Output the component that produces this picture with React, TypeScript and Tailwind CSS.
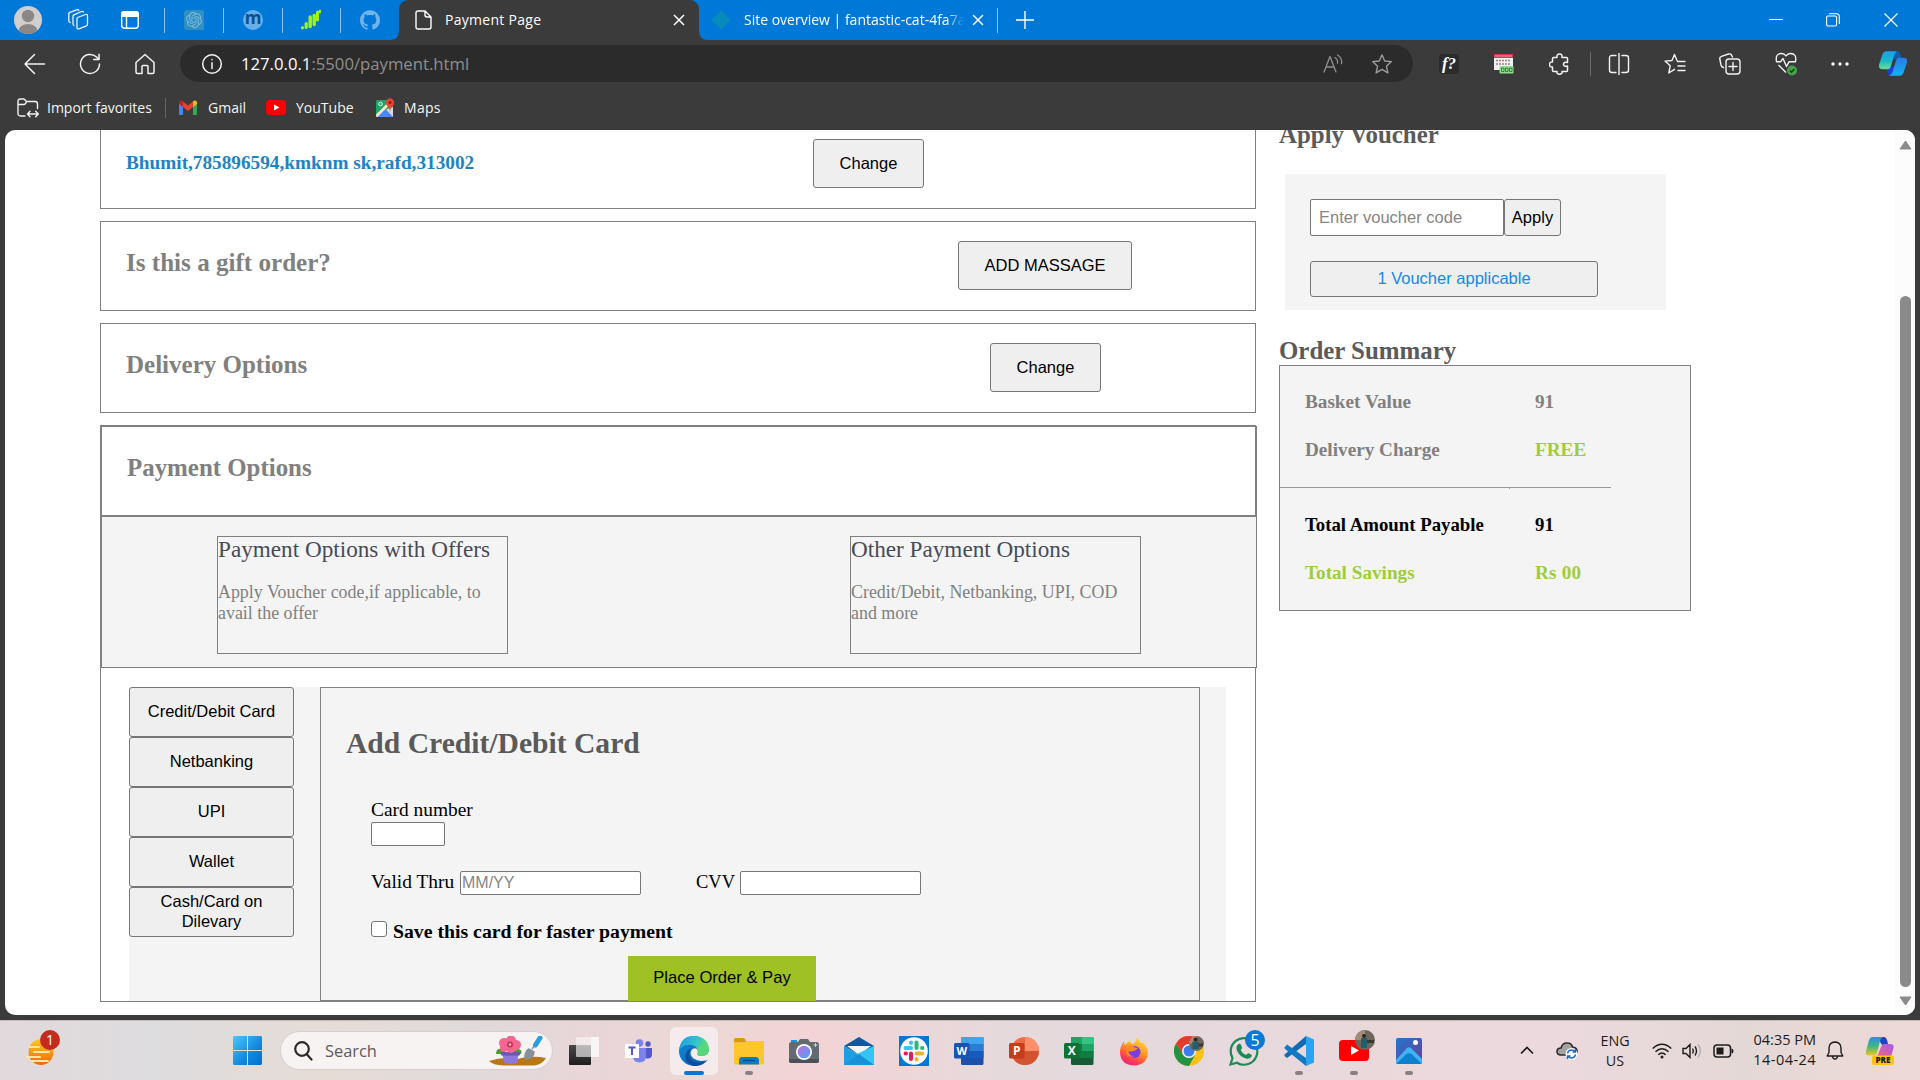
import type { ReactNode } from "react";
import { SiGithub, SiOpenai } from "react-icons/si";

function Slot({ className = "", children }: { className?: string; children: ReactNode }) {
  return <div className={`flex h-7 w-7 shrink-0 items-center justify-center ${className}`}>{children}</div>;
}

function Line({ children, size = 22, width = 1.3, color = "#f2f2f2" }: { children: ReactNode; size?: number; width?: number; color?: string }) {
  return (
    <svg width={size} height={size} viewBox="0 0 22 22" fill="none" stroke={color} strokeWidth={width} strokeLinecap="round" strokeLinejoin="round">
      {children}
    </svg>
  );
}

const STAR = "M11 1.8 13.7 8l6.7.6-5 4.6 1.5 6.7L11 16.4l-5.9 3.5 1.5-6.7-5-4.6L8.3 8z";

function CloseX() {
  return (
    <svg width="12" height="12" viewBox="0 0 12 12" stroke="#fff" strokeWidth="1.5">
      <path d="M1 1l10 10M11 1L1 11" />
    </svg>
  );
}

function TitleBar() {
  return (
    <div className="flex h-10 shrink-0 items-center bg-[#0078d7]">
      <Slot className="ml-3.5">
        <svg width="28" height="28" viewBox="0 0 28 28">
          <defs><clipPath id="av"><circle cx="14" cy="14" r="14" /></clipPath></defs>
          <circle cx="14" cy="14" r="14" fill="#d1cfcd" />
          <g clipPath="url(#av)" fill="#8a8785"><circle cx="14" cy="10" r="6.2" /><ellipse cx="14" cy="25" rx="9.5" ry="7" /></g>
        </svg>
      </Slot>
      <Slot className="ml-[22px]">
        <Line>
          <path d="M10.5 8.5 18.5 5.500q2-.6 2 1.300v8.500q0 1-1 1.500l-7.500 3q-2 .6-2-1.300V9.800q0-1 .5-1.300z" />
          <path d="M7 16.500q-1-.4-1-1.700V7.300q0-1 1-1.500l7.500-3.300q1.300-.5 2 .5M3.200 13.500q-1.400-.5-1.400-1.700V4.800q0-1 1-1.500L9.800.8q1.300-.5 2 .5" />
        </Line>
      </Slot>
      <Slot className="ml-6">
        <svg width="20" height="20" viewBox="0 0 20 20"><rect x="1.7" y="1.7" width="16.6" height="16.6" rx="3" fill="none" stroke="#fff" strokeWidth="1.4" /><path d="M1 7V4q0-3 3-3h12q3 0 3 3v3z" fill="#fff" /><path d="M6.5 7v11" stroke="#fff" strokeWidth="1.4" /></svg>
      </Slot>
      <div className="ml-5 h-[25px] w-px bg-[#8fc3ee]" />
      <Slot className="ml-[15px]">
        <div className="flex h-5 w-5 items-center justify-center rounded-tl-[3px] rounded-tr-[3px] rounded-bl-[3px] bg-[#2f8fc0]"><SiOpenai size={16} color="#7db9dd" /></div>
      </Slot>
      <div className="ml-[15px] h-[25px] w-px bg-[#8fc3ee]" />
      <Slot className="ml-[15px]">
        <div className="flex h-5 w-5 items-center justify-center rounded-full bg-[#66aee8] pb-1 font-['Open_Sans'] text-[17px] leading-5 font-bold text-[#0a4f8f]">m</div>
      </Slot>
      <div className="ml-[15px] h-[25px] w-px bg-[#8fc3ee]" />
      <Slot className="ml-[14px]">
        <svg width="22" height="22" viewBox="0 0 22 22" fill="none" stroke="#a4f50a" strokeLinecap="round">
          <path d="M2.500 18.500v.5" strokeWidth="3" /><path d="M6.200 14.500v4" strokeWidth="3.200" /><path d="M10.200 8v9.500" strokeWidth="3.400" /><path d="M14.200 6.500v9" strokeWidth="3.400" /><path d="M17.500 3v8" strokeWidth="3" /><path d="M20 1.500v2" strokeWidth="2" />
        </svg>
      </Slot>
      <div className="ml-[15px] h-[25px] w-px bg-[#8fc3ee]" />
      <Slot className="ml-[15px]"><SiGithub size={20} color="#6fb4ea" /></Slot>
      <div className="relative ml-[15px] flex h-10 w-[300px] shrink-0 items-center rounded-t-[9px] bg-[#3b3b3b]">
        <svg className="absolute bottom-0 -left-[9px]" width="9" height="9"><path d="M9 0v9H0q9 0 9-9z" fill="#3b3b3b" /></svg>
        <svg className="absolute -right-[9px] bottom-0" width="9" height="9"><path d="M0 0v9h9q-9 0-9-9z" fill="#3b3b3b" /></svg>
        <Slot className="ml-2.5">
          <svg width="17" height="20" viewBox="0 0 17 20" fill="none" stroke="#fff" strokeWidth="1.4"><path d="M3 1h7l6 6v10q0 2-2 2H3q-2 0-2-2V3q0-2 2-2zM10 1v4q0 2 2 2h4" /></svg>
        </Slot>
        <span className="ml-2 pb-0.5 text-[14px] tracking-[0.28px] text-white">Payment Page</span>
        <Slot className="mr-[6px] ml-auto"><CloseX /></Slot>
      </div>
      <Slot className="ml-2">
        <svg width="20" height="20" viewBox="0 0 20 20"><path d="M10 .5 19.500 10 10 19.500.5 10z" fill="#078bbb" /></svg>
      </Slot>
      <div className="ml-[9px] w-[220px] overflow-hidden pb-0.5 text-[14px] whitespace-nowrap text-white [mask-image:linear-gradient(90deg,#000_92%,transparent)]">Site overview | fantastic-cat-4fa7a</div>
      <Slot className="ml-0"><CloseX /></Slot>
      <div className="ml-[5px] h-[25px] w-px bg-[#8fc3ee]" />
      <Slot className="ml-[13px]">
        <svg width="18" height="18" stroke="#fff" strokeWidth="1.4"><path d="M9 0v18M0 9h18" /></svg>
      </Slot>
      <Slot className="ml-auto"><svg width="14" height="2"><path d="M0 .5h14" stroke="#fff" /></svg></Slot>
      <Slot className="ml-[29px]">
        <svg width="14" height="14" viewBox="0 0 14 14" fill="none" stroke="#fff" strokeWidth="1.1"><rect x=".6" y="3" width="10" height="10" rx="1.5" /><path d="M3 .7h7.500q2.800 0 2.800 2.800V11" /></svg>
      </Slot>
      <Slot className="mr-[15px] ml-[30px]">
        <svg width="14" height="14" stroke="#fff" strokeWidth="1.2"><path d="M.5.5l13 13M13.500.5l-13 13" /></svg>
      </Slot>
    </div>
  );
}

function CopilotLogo() {
  return (
    <svg width="31" height="27" viewBox="0 0 31 27">
      <defs>
        <linearGradient id="cp1" x1="0" y1="0" x2="0" y2="1"><stop offset="0" stopColor="#16a3ea" /><stop offset=".55" stopColor="#1fb6c9" /><stop offset="1" stopColor="#6ee08b" /></linearGradient>
        <linearGradient id="cp2" x1="0" y1="0" x2="0" y2="1"><stop offset="0" stopColor="#2b7be4" /><stop offset="1" stopColor="#14b1fb" /></linearGradient>
      </defs>
      <path d="M14 0h7q2 0 3 4l1 4-7 2z" fill="#0c5fb0" />
      <path d="M17 26h-6q-2 0-2-4l-1-4 9-2z" fill="#1d3fd6" />
      <path d="M8 0h12q-2 1-3 4l-4 13q-1 3-4 3H4q-5 0-4-5L4 3q1-3 4-3z" fill="url(#cp1)" />
      <path d="M22 7h5q5 0 4 5l-4 12q-1 3-4 3H11q3-1 4-4l4-13q1-3 3-3z" fill="url(#cp2)" />
    </svg>
  );
}

function Toolbar() {
  return (
    <div className="flex h-[47px] shrink-0 items-center">
      <Slot className="ml-[21px]"><Line width={1.5}><path d="M1 11h19.500M10.500 1.500 1 11l9.500 9.500" /></Line></Slot>
      <Slot className="ml-[27px]"><Line width={1.5}><path d="M20.500 11a9.500 9.500 0 1 1-3-7l2.500 2.500M20 1.200v5.300h-5.300" /></Line></Slot>
      <Slot className="ml-[27px]"><Line width={1.5}><path d="M2 9.500 11 1.500l9 8V19q0 1.500-1.500 1.500H14v-7q0-1-1-1H9q-1 0-1 1v7H3.500Q2 20.500 2 19z" /></Line></Slot>
      <div className="ml-[21px] flex h-[37px] w-[1233px] shrink-0 items-center rounded-full bg-[#2b2b2b]">
        <Slot className="ml-[18px]"><Line width={1.5}><circle cx="11" cy="11" r="9.3" /><path d="M11 9.800v5.700M11 6.500v.3" /></Line></Slot>
        <span className="ml-[15px] text-[16.7px] text-[#8f8f8f]"><span className="text-white">127.0.0.1</span>:5500/payment.html</span>
        <Slot className="ml-auto"><Line color="#8f8f8f"><path d="M2 19 8 3.500 14 19M4 14h8M13 4.500q3 2 2.500 5.500M15.500 2q5 3 4 8.500" /></Line></Slot>
        <Slot className="mr-[17px] ml-[21px]"><Line color="#a0a0a0"><path d={STAR} /></Line></Slot>
      </div>
      <Slot className="ml-[22px]">
        <div className="flex h-5 w-5 items-center justify-center rounded-sm bg-[#2b2b2b] font-['Liberation_Serif'] text-[17px] font-bold text-white italic">f?</div>
      </Slot>
      <Slot className="ml-[27px]">
        <svg width="20" height="20" viewBox="0 0 20 20">
          <rect width="19" height="16" fill="#f4f0f0" /><path d="M0 0h19v4H0z" fill="#c93a50" /><path d="M1 2h17" stroke="#f3b7bf" strokeWidth=".8" />
          <path d="M2 6.500h15M2 10h15" stroke="#8d8888" strokeWidth="1.6" strokeDasharray="2 1" />
          <rect x="5.500" y="12" width="14" height="7.500" rx="1" fill="#8fe08f" />
          <path d="M7.500 14h2.500v3.500H7.500zM11.500 14h2.500v3.500h-2.500zM15.500 14H18v3.500h-2.500z" fill="none" stroke="#2f6a2f" strokeWidth=".8" />
        </svg>
      </Slot>
      <Slot className="ml-7"><Line width={1.5}><path d="M4.500 4.500H8q-.5-3.500 2.500-3.500T13 4.500h4.500q1 0 1 1v4q-4-1-4 1.800t4 1.700v4.500q0 1-1 1H13q.5 2.800-2.500 2.800T8 18.500H4.500q-1 0-1-1V14q-3 .3-3-2.500t3-2.500V5.500q0-1 1-1z" /></Line></Slot>
      <div className="ml-4 h-6 w-px bg-[#6a6a6a]" />
      <Slot className="ml-3.5"><Line width={1.4}><path d="M8 2.500H4Q1.500 2.500 1.500 5v12Q1.500 19.500 4 19.500h4M11 .5v21M14 2.500h4q2.500 0 2.500 2.500v12q0 2.500-2.500 2.500h-4" /></Line></Slot>
      <Slot className="ml-7"><Line width={1.4}><path d="M13 7.500 10.500 1.500 8 7.500l-7 .6L6.200 12.800 4.800 20l5.700-3.700M13.500 8.500H21M14 13h7M14 17.500h7" /></Line></Slot>
      <Slot className="ml-[27px]"><Line width={1.4}><path d="M4.500 14.500Q2.500 14 2 12L.8 6Q.500 4 2.500 3.300L9.500 1q2-.5 3 1l1 2" /><rect x="7" y="6" width="14" height="15" rx="3" /><path d="M14 9.500v8M10 13.500h8" /></Line></Slot>
      <Slot className="ml-7">
        <svg width="22" height="24" viewBox="0 0 22 24" fill="none" stroke="#f2f2f2" strokeWidth="1.4" strokeLinejoin="round">
          <path d="M1.500 9.500q-1.500-8 5-8 3 0 4.500 2.500 1.500-2.500 4.500-2.500 6.500 0 5 8M1 9.800h4.500L8 6.500l3.500 8L14 9.800h7M3.500 13 11 20.500" /><circle cx="17" cy="18.500" r="5" fill="#45a34a" stroke="none" /><path d="m14.800 18.600 1.600 1.600 3-3.200" stroke="#163d18" />
        </svg>
      </Slot>
      <Slot className="ml-[26px]"><svg width="18" height="4" fill="#fff"><circle cx="2" cy="2" r="1.7" /><circle cx="9" cy="2" r="1.7" /><circle cx="16" cy="2" r="1.7" /></svg></Slot>
      <Slot className="ml-[25px]"><CopilotLogo /></Slot>
    </div>
  );
}

function FavoritesBar() {
  return (
    <div className="flex h-[43px] shrink-0 items-center pb-0.5 text-[14px] whitespace-nowrap text-[#f5f5f5]">
      <Slot className="ml-3.5"><Line width={1.4}><path d="M8 19H3.500Q1 19 1 16.500v-12Q1 2 3.500 2H7l2.500 2.500H18q2.500 0 2.500 2.500v4.500M1 7.500h6q1.500 0 2.500-3M10.500 17h10.800M13 14.300 10.500 17l2.500 2.700M18.700 14.300l2.600 2.700-2.600 2.700" /></Line></Slot>
      <span className="ml-[5px] w-[105px]">Import favorites</span>
      <div className="ml-[13px] h-5 w-px bg-[#666]" />
      <Slot className="ml-2">
        <svg width="18" height="15" viewBox="0 0 18 15"><path d="M0 2v12q0 1 1 1h3V5z" fill="#4285f4" /><path d="M18 2v12q0 1-1 1h-3V5z" fill="#34a853" /><path d="M4 1.500 9 5.500l5-4V7l-5 4-5-4z" fill="#ea4335" /><path d="M14 1.500Q16-.5 18 2v2l-4 3z" fill="#fbbc04" /><path d="M4 1.500Q2-.500 0 2v2l4 3z" fill="#c5221f" /></svg>
      </Slot>
      <span className="ml-[6px] w-[38px]">Gmail</span>
      <Slot className="ml-4">
        <svg width="20" height="15" viewBox="0 0 20 15"><rect width="20" height="15" rx="3.5" fill="#f00" /><path d="m8 4.500 5.500 3L8 10.500z" fill="#fff" /></svg>
      </Slot>
      <span className="ml-1.5 w-[58px]">YouTube</span>
      <Slot className="ml-[17px]">
        <svg width="19" height="20" viewBox="0 0 19 20"><rect y="2" width="17" height="17" rx="1.5" fill="#1fa463" /><path d="M1 19 9 10.500l8 8q0 .5-1 .5z" fill="#4a89f4" /><path d="M0 16.500 13.500 3l2 2L1.500 19Q0 19 0 17.500z" fill="#f5e9c6" /><path d="M10 11.500 17 19V9z" fill="#d6d8da" /><circle cx="4.5" cy="6" r="1.8" fill="none" stroke="#fff" /><path d="M14 14q-.3-4-2.700-6Q9.500 6 10 3.800 11 .3 14 .3t4 3.500q.5 2.200-1.300 4.200Q14.300 10 14 14z" fill="#ea4335" /><circle cx="14" cy="4.5" r="1.5" fill="#8c1d18" /></svg>
      </Slot>
      <span className="ml-[5px] tracking-[0.3px]">Maps</span>
    </div>
  );
}

function GreyButton({ className = "", children }: { className?: string; children: ReactNode }) {
  return (
    <button className={`flex shrink-0 items-center justify-center rounded-[3px] border border-[#767676] bg-[#efefef] pb-0.5 font-['Liberation_Sans'] text-[16.5px] leading-5 text-black ${className}`}>
      {children}
    </button>
  );
}

function OfferBox({ title, text, className = "" }: { title: string; text: string; className?: string }) {
  return (
    <div className={`h-[118px] w-[291px] shrink-0 border border-[#808080] ${className}`}>
      <h4 className="text-[23.2px] leading-6 text-[#474b58]">{title}</h4>
      <p className="mt-[21px] text-[17.9px] leading-[21px] text-[#808080]">{text}</p>
    </div>
  );
}

function CardForm() {
  return (
    <div className="ml-[26px] h-[314px] w-[880px] border border-[#808080]">
      <h2 className="mt-[38px] ml-[25px] text-[29.6px] leading-[34px] font-bold text-[#5a5a5a]">Add Credit/Debit Card</h2>
      <div className="mt-[38px] ml-[50px] text-[19.4px] leading-6 text-black">
        <div>Card number</div>
        <input className="block h-6 w-[74px] rounded-[2px] border border-[#767676] bg-white" />
        <div className="mt-6 flex h-6 items-start">
          <span className="w-[89px]">Valid Thru</span>
          <input placeholder="MM/YY" className="mt-px h-6 w-[181px] rounded-[2px] border border-[#767676] bg-white px-px font-['Liberation_Sans'] text-[16px] placeholder:text-[#858585]" />
          <span className="ml-[55px] w-[44px] text-[18.5px]">CVV</span>
          <input className="mt-px h-6 w-[181px] rounded-[2px] border border-[#767676] bg-white" />
        </div>
        <label className="mt-[25px] flex items-start text-[19.75px] font-bold">
          <span className="mt-0.5 h-4 w-4 rounded-[3px] border border-[#767676] bg-white" />
          <span className="ml-1.5">Save this card for faster payment</span>
        </label>
      </div>
      <button className="relative mt-[13px] ml-[307px] flex h-[45px] w-[188px] items-center justify-center bg-[#9fc125] font-['Liberation_Sans'] text-[16.6px] text-black">Place Order &amp; Pay</button>
    </div>
  );
}

function CheckoutSteps() {
  return (
    <div className="ml-[95px] w-[1156px] shrink-0">
      <section className="flex h-[79px] items-start border border-t-0 border-[#808080] pl-[25px]">
        <h3 className="mt-[21px] w-[687px] text-[19.25px] leading-6 font-bold text-[#1e83c3]">Bhumit,785896594,kmknm sk,rafd,313002</h3>
        <GreyButton className="mt-[9px] h-[49px] w-[111px]">Change</GreyButton>
      </section>
      <section className="mt-3 flex h-[90px] items-start border border-[#808080] pl-[25px]">
        <h3 className="mt-[25px] w-[832px] text-[25.1px] leading-8 font-bold text-[#808080]">Is this a gift order?</h3>
        <GreyButton className="mt-[19px] h-[49px] w-[174px]">ADD MASSAGE</GreyButton>
      </section>
      <section className="mt-3 flex h-[90px] items-start border border-[#808080] pl-[25px]">
        <h3 className="mt-[25px] w-[864px] text-[25px] leading-8 font-bold text-[#808080]">Delivery Options</h3>
        <GreyButton className="mt-[19px] h-[49px] w-[111px]">Change</GreyButton>
      </section>
      <section className="mt-3 h-[577px] border border-[#808080]">
        <div className="h-[90px] w-[1156px] border border-[#808080] pt-[25px] pl-[25px]">
          <h3 className="text-[24.9px] leading-8 font-bold text-[#808080]">Payment Options</h3>
        </div>
        <div className="flex h-[152px] w-[1156px] items-start border border-[#808080] bg-[#f4f4f4] pt-[19px] pl-[115px]">
          <OfferBox title="Payment Options with Offers" text="Apply Voucher code,if applicable, to avail the offer" />
          <OfferBox className="ml-[342px]" title="Other Payment Options" text="Credit/Debit, Netbanking, UPI, COD and more" />
        </div>
        <div className="mt-[19px] ml-7 flex h-[314px] w-[1097px] bg-[#f4f4f4]">
          <div className="w-[165px] shrink-0">
            {["Credit/Debit Card", "Netbanking", "UPI", "Wallet", "Cash/Card on Dilevary"].map((m) => (
              <GreyButton key={m} className="h-[50px] w-[165px] px-[17px]">{m}</GreyButton>
            ))}
          </div>
          <CardForm />
        </div>
      </section>
    </div>
  );
}

function SummaryRow({ label, value, className = "", valueClass = "" }: { label: string; value: string; className?: string; valueClass?: string }) {
  return (
    <div className={`flex pl-[25px] text-[19.2px] leading-6 font-bold ${className}`}>
      <span className="w-[230px]">{label}</span>
      <span className={valueClass}>{value}</span>
    </div>
  );
}

function OrderPanel() {
  return (
    <div className="-mt-[11px] ml-[23px] w-[412px] shrink-0">
      <h3 className="text-[24.9px] leading-8 font-bold text-[#5a5a5a]">Apply Voucher</h3>
      <div className="mt-[23px] ml-1.5 h-[136px] w-[381px] bg-[#f4f4f4] p-[25px]">
        <div className="flex">
          <input placeholder="Enter voucher code" className="h-[37px] w-[194px] rounded-[2px] border border-[#767676] bg-white px-2 font-['Liberation_Sans'] text-[16.5px] placeholder:text-[#858585]" />
          <GreyButton className="h-[37px] w-[57px]">Apply</GreyButton>
        </div>
        <GreyButton className="mt-[25px] h-9 w-[288px] [&]:text-[#1488ec]">1 Voucher applicable</GreyButton>
      </div>
      <h3 className="mt-[26px] text-[24.9px] leading-[29px] font-bold text-[#5a5a5a]">Order Summary</h3>
      <div className="h-[246px] w-[412px] border border-[#808080] bg-[#f4f4f4] pt-6">
        <SummaryRow className="text-[#808080]" label="Basket Value" value="91" />
        <SummaryRow className="mt-6 text-[#808080]" label="Delivery Charge" value="FREE" valueClass="text-[#a1cc3a]" />
        <div className="mt-[25px] flex h-0.5">
          <div className="w-[230px] border-t border-r border-[#9a9a9a]" />
          <div className="w-[101px] border-t border-[#9a9a9a]" />
        </div>
        <SummaryRow className="mt-6 text-black [&>span]:text-[18.8px]" label="Total Amount Payable" value="91" />
        <SummaryRow className="mt-6 text-[#a1cc3a]" label="Total Savings" value="Rs 00" valueClass="tracking-[0.2px]" />
      </div>
    </div>
  );
}

function Scrollbar() {
  return (
    <div className="ml-auto flex h-full w-5 shrink-0 flex-col items-center bg-[#fcfcfc]">
      <svg className="mt-[10px] ml-px shrink-0" width="13" height="10"><path d="M6.500 1 12 9H1z" fill="#8b8b8b" stroke="#8b8b8b" strokeLinejoin="round" /></svg>
      <div className="mt-[146px] ml-px h-[691px] w-[11px] shrink-0 rounded-full bg-[#8b8b8b]" />
      <svg className="mt-[9px] ml-px shrink-0" width="13" height="10"><path d="M6.500 9 12 1H1z" fill="#8b8b8b" stroke="#8b8b8b" strokeLinejoin="round" /></svg>
    </div>
  );
}

function AppIcon({ children, className = "" }: { children: ReactNode; className?: string }) {
  return <svg width="30" height="30" viewBox="0 0 30 30" className={className}>{children}</svg>;
}

function Letter({ c, fill, size = 12 }: { c: string; fill: string; size?: number }) {
  return (
    <>
      <rect x="0" y="7" width="15.5" height="15.5" rx="1.5" fill={fill} />
      <text x="7.7" y="18.7" fontSize={size} fontWeight="700" fill="#fff" textAnchor="middle" fontFamily="Open Sans, sans-serif">{c}</text>
    </>
  );
}

function Portrait({ cx, cy, r }: { cx: number; cy: number; r: number }) {
  return (
    <g>
      <circle cx={cx} cy={cy} r={r} fill="#6d665d" />
      <path d={`M${cx - r} ${cy}a${r} ${r} 0 0 1 ${r} ${-r}v${r}z`} fill="#a08d78" />
      <path d={`M${cx - 4} ${cy - 2}h6v${r}h-6z`} fill="#1f5f6b" />
      <circle cx={cx - 1} cy={cy - 4} r="2" fill="#2c2320" />
      <path d={`M${cx + 2} ${cy}h${r - 3}v3h-${r - 3}z`} fill="#3b3733" />
    </g>
  );
}

const TASKS: { name: string; icon: ReactNode; running?: boolean }[] = [
  { name: "taskview", icon: <AppIcon><defs><linearGradient id="tv" x2="0" y2="1"><stop stopColor="#494949" /><stop offset="1" stopColor="#1e1e1e" /></linearGradient></defs><rect y="9" width="22" height="20" rx="1" fill="url(#tv)" /><rect x="7" y="1" width="23" height="20" rx="1" fill="#f7f5f5" opacity=".65" /><path d="M22 1h7q1 0 1 1v18q0 1-1 1h-7z" fill="#fff" opacity=".5" /></AppIcon> },
  { name: "teams", icon: <AppIcon><circle cx="15.5" cy="7" r="3.8" fill="#7b83eb" /><circle cx="24" cy="8" r="2.7" fill="#5059c9" /><path d="M19 12h9v6.500q0 4-4.500 4-4.500 0-4.500-4z" fill="#5059c9" /><path d="M9 12h13v8q0 6.500-6.500 6.500T9 20z" fill="#7b83eb" /><rect x="1" y="8" width="14" height="14" fill="#fff" /><path d="M4.500 11.500h7M8 11.500V19" stroke="#5059c9" strokeWidth="2" /></AppIcon> },
  { name: "edge", icon: <AppIcon><defs><linearGradient id="e1" x1="0" y1=".3" x2="1" y2=".6"><stop stopColor="#1fa0dc" /><stop offset=".5" stopColor="#2fc3cd" /><stop offset="1" stopColor="#6be35a" /></linearGradient><linearGradient id="e2" x2="1" y2="1"><stop stopColor="#0f8ad8" /><stop offset="1" stopColor="#0d5fb8" /></linearGradient></defs><circle cx="15" cy="15" r="15" fill="url(#e2)" /><path d="M.5 13Q2 0 15 0q14 1 15 12.500 0 7-7.500 7.500-5 0-4-3 1-5-3-7-8-3.500-15 3z" fill="url(#e1)" /><path d="M11.500 14Q8 20 13 24q6 5 15.500 0-4.500 6.500-14 6Q5 27 6.500 18.500 8 14 11.500 12z" fill="#0f4f9c" /><path d="M30 13q0 7-7.500 7-4.500 0-4-2.500 1-2-.5-4.500-4-2-6 2-1.500 4 2.500 7.500 6 4 13 1.500 3-2.500 2.500-11z" fill="#f4ecee" /><path d="M18 12q2 3 .5 5.500-.5 2.500 4 2.500 7.500 0 7.500-7.500L24 8z" fill="#57d77c" /></AppIcon> },
  { name: "files", running: true, icon: <AppIcon><path d="M0 3.500Q0 2 1.500 2H9q1 0 2 1l2 3.500H0z" fill="#d99a06" /><path d="M0 6.500h10.500l2-1.500H30v22q0 1.500-1.500 1.500h-27Q0 28.500 0 27z" fill="#fcc62c" /><path d="M5 28.500v-4q0-3.500 3-3.500h14q3 0 3 3.500v4z" fill="#0f7bc5" /><path d="M9 24.500h12" stroke="#064f8c" strokeWidth="1.5" /></AppIcon> },
  { name: "camera", icon: <AppIcon><defs><linearGradient id="cm" x2="1" y2="1"><stop stopColor="#c36be0" /><stop offset="1" stopColor="#4aa8f0" /></linearGradient></defs><rect x="2" y="4" width="6" height="4" fill="#1597e0" /><path d="M0 8.500Q0 6 2.500 6H9l2-3h8l2 3h6.500Q30 6 30 8.500v16q0 2.500-2.500 2.500h-25Q0 27 0 24.500z" fill="#636a70" /><path d="M0 23h30v1.500q0 2.500-2.500 2.500h-25Q0 27 0 24.500z" fill="#4b5156" /><circle cx="15" cy="16" r="8" fill="#fff" /><circle cx="15" cy="16" r="6.3" fill="url(#cm)" /><path d="M26.500 7v4M24.500 9h4" stroke="#cfd3d6" /></AppIcon> },
  { name: "mail", icon: <AppIcon><path d="M0 10 15 1l15 9-15 9z" fill="#0c59a4" /><path d="M3 10h24l-12 9z" fill="#f4f7f9" /><path d="M0 10l15 9 15-9v19H0z" fill="#1c9ee0" /><path d="M30 10v19L13 18z" fill="#33c5f3" /><path d="M0 29 15 18l15 11z" fill="#1791d8" /></AppIcon> },
  { name: "slack", icon: <AppIcon><path d="M0 0h30v30H0z" fill="#0078d4" /><circle cx="15" cy="15" r="13.8" fill="#fff" /><g strokeWidth="4" strokeLinecap="round"><path d="M6.500 12H12M12 6.500v.5" stroke="#36c5f0" /><path d="M17.500 6.500V12M23 12h.5" stroke="#2eb67d" /><path d="M17.500 17.500H23M17.500 23v.5" stroke="#ecb22e" /><path d="M12 17.500V23M6.500 17.500H7" stroke="#e01e5a" /></g></AppIcon> },
  { name: "word", icon: <AppIcon><rect x="7" y="1" width="22.5" height="28" rx="1.5" fill="#1b4fa8" /><path d="M7 1h22.500v7H7z" fill="#41a5ee" /><path d="M7 8h22.500v7H7z" fill="#2b7cd3" /><path d="M7 15h22.500v7H7z" fill="#185abd" /><Letter c="W" fill="#1854b0" size={11} /></AppIcon> },
  { name: "powerpoint", icon: <AppIcon><circle cx="16" cy="15" r="14" fill="#ed6c47" /><path d="M16 1a14 14 0 0 1 14 14H16z" fill="#ff8f6b" /><path d="M2 15h28a14 14 0 0 1-28 0z" fill="#d35230" /><Letter c="P" fill="#c43e1c" /></AppIcon> },
  { name: "excel", icon: <AppIcon><rect x="7" y="1" width="22.5" height="28" rx="1.5" fill="#185c37" /><path d="M7 1h11v7H7z" fill="#21a366" /><path d="M18 1h11.500v7H18z" fill="#33c481" /><path d="M7 8h11v14H7z" fill="#107c41" /><path d="M18 8h11.500v7H18z" fill="#21a366" /><path d="M18 15h11.500v7H18z" fill="#107c41" /><Letter c="X" fill="#0f7038" /></AppIcon> },
  { name: "firefox", icon: <AppIcon><defs><linearGradient id="ff" x1=".8" y1="0" x2=".3" y2="1"><stop stopColor="#ffe43c" /><stop offset=".45" stopColor="#ff9a2a" /><stop offset=".8" stopColor="#ff3d51" /><stop offset="1" stopColor="#e3267f" /></linearGradient></defs><path d="M18 1q2 2 3 5 5 1 7 6 1 3 1 5-1 12-14 12.500Q2 29 1 17 1 10 5 5q0 3 1 4 3-3 5-4 0 2 2 3 4-1 5-7z" fill="url(#ff)" /><circle cx="15.5" cy="16" r="6" fill="#7a3fe0" /><path d="M7 11q5-3 8 0 2 1 4 1-2 3-5 3-3 1-5 0 1 5 6 5-6 2-8-3z" fill="#ff8a1f" /></AppIcon> },
  { name: "chrome", icon: <AppIcon><circle cx="15" cy="15" r="15" fill="#fbc116" /><path d="M2 7.500A15 15 0 0 0 15 30l6-11-12-.5z" fill="#229342" /><path d="M2 7.500A15 15 0 0 1 28 7.500H15L8.500 18.500z" fill="#e33b2e" /><circle cx="15" cy="15" r="7" fill="#fff" /><circle cx="15" cy="15" r="5.5" fill="#3b7ded" /><Portrait cx={22.5} cy={7.5} r={7.5} /></AppIcon> },
  { name: "whatsapp", icon: <AppIcon className="overflow-visible"><path d="M1.500 28.500 3.500 22Q1.500 18.500 1.700 15A13.300 13.300 0 1 1 8 26.700z" fill="none" stroke="#1b8a55" strokeWidth="2.2" /><path d="M9 8.500q2-1.500 3 .5l1 2.500q.3 1-1.300 2.500 2 4 5.500 5 1.300-2 2.500-1.700l2.800 1.500q1 .7-.4 2.500-2 2-5 1.200-6-1.500-9-7.500-1.700-4 .9-6.500z" fill="#1b8a55" /><circle cx="26" cy="4" r="10" fill="#0a78d6" /><text x="26" y="9.5" fontSize="16" fill="#fff" textAnchor="middle" fontFamily="Open Sans, sans-serif">5</text></AppIcon> },
  { name: "vscode", running: true, icon: <AppIcon><path d="M.5 18.500 22 0v8L3 22l-2.500-2z" fill="#0f6cb5" /><path d="M.5 11.500 3 8.500l19 13.500v8L.5 12.500z" fill="#1379c4" /><path d="M22 0l8 3.500v23L22 30z" fill="#2aa3f2" /></AppIcon> },
  { name: "youtube", running: true, icon: <AppIcon className="overflow-visible"><rect y="4" width="30" height="21" rx="4" fill="#f00" /><path d="m12 10 8 4.500-8 4.500z" fill="#fff" /><Portrait cx={26} cy={4} r={10} /></AppIcon> },
  { name: "photos", running: true, icon: <AppIcon><defs><linearGradient id="ph" x2="1" y2="1"><stop stopColor="#2277c9" /><stop offset="1" stopColor="#6a3d9d" /></linearGradient><clipPath id="phc"><rect x="2" y="2" width="26" height="26" rx="2" /></clipPath></defs><g clipPath="url(#phc)"><rect x="2" y="2" width="26" height="26" fill="url(#ph)" /><path d="M2 24 12.500 12.500q2.500-2.500 5 0L29 24v6H2z" fill="#3fb4f2" /><path d="M2 28 12 18.500q3-2.500 6 0L28 28z" fill="#0f7fd0" /></g><circle cx="21.5" cy="6.5" r="2.5" fill="#fff" /></AppIcon> },
];

function Taskbar() {
  return (
    <div className="flex h-[60px] shrink-0 items-center border-t border-[#c2b8b9] bg-[linear-gradient(90deg,#e2d9dc_0%,#dddcde_8%,#e6dcd6_17%,#e0dada_24%,#ead5d8_32%,#ead9d5_36%,#f3d3d5_42%,#e6d9dc_52%,#e5d9de_60%,#ead8db_72%,#ecd9de_80%,#e4d8d6_91%,#eed9d7_100%)] text-[#1c1c1c]">
      <svg className="mb-[3px] ml-[25px] shrink-0" width="36" height="38" viewBox="0 0 36 38">
        <defs><linearGradient id="egg" x2="0" y2="1"><stop stopColor="#fccb1f" /><stop offset="1" stopColor="#f0650f" /></linearGradient></defs>
        <ellipse cx="16" cy="22" rx="12.5" ry="13" fill="url(#egg)" />
        <path d="M4 17h10M9 22h15M2 27h13M7 31h16" stroke="#f6e7a8" strokeWidth="2" strokeLinecap="round" />
        <circle cx="25" cy="10" r="10" fill="#c42b1c" />
        <text x="25" y="15" fontSize="14" fill="#fff" textAnchor="middle" fontFamily="Open Sans, sans-serif">1</text>
      </svg>
      <svg className="ml-[172px] shrink-0" width="29" height="29" viewBox="0 0 29 29">
        <defs><linearGradient id="win" x2="1" y2="1"><stop stopColor="#4cc8fb" /><stop offset=".6" stopColor="#1287dc" /><stop offset="1" stopColor="#0070cc" /></linearGradient></defs>
        <path d="M1 0h13v14H0V1zM15 0h13l1 1v13H15zM0 15h14v14H1l-1-1zM15 15h14v13l-1 1H15z" fill="url(#win)" />
      </svg>
      <div className="ml-[18px] flex h-[39px] w-[273px] shrink-0 items-center rounded-full border border-[#d9cdcf] bg-[#f7f3f3]">
        <svg className="ml-[13px]" width="19" height="20" viewBox="0 0 19 20" fill="none" stroke="#2b2b2b" strokeWidth="2.2" strokeLinecap="round"><circle cx="8" cy="8" r="6.8" /><path d="m12.800 13.300 4.700 5.200" /></svg>
        <span className="ml-3 pt-px text-[16.4px] text-[#5c5a5a]">Search</span>
        <svg className="mr-1.5 ml-auto" width="57" height="30" viewBox="0 0 57 30">
          <path d="M0 25q14-5 28-2 14-4 29-1-4 7-12 7.500H14Q4 29 0 25z" fill="#b97816" />
          <path d="M7 18q0-6 6-5l4 5zM32 18q2-5-4-5l-6 4z" fill="#4a9c35" />
          <path d="M13 17h17l-2.500 10q-6 2-12 0z" fill="#8f78dc" /><rect x="12" y="16" width="19" height="3.5" rx="1" fill="#6d54b8" />
          <g fill="#f2668f"><circle cx="15" cy="7" r="5" /><circle cx="22" cy="4.5" r="5" /><circle cx="27" cy="9" r="5" /><circle cx="22" cy="12" r="5" /><circle cx="15" cy="12" r="4" /></g>
          <circle cx="21" cy="8.5" r="3" fill="#c92f5f" /><circle cx="21" cy="8.5" r="1.2" fill="#ffe08a" />
          <path d="m43 13 3-4M36 22q0-7 4-9l5 3q0 5-7 7z" fill="#87919b" stroke="#87919b" strokeWidth="1.5" /><path d="m46.500 9 4.500-7" stroke="#2a9fe0" strokeWidth="5" strokeLinecap="round" />
        </svg>
      </div>
      <div className="ml-[3px] flex">
        {TASKS.map((t) => (
          <div key={t.name} className="flex w-[55px] justify-center">
            <div className={`flex h-12 w-12 flex-col items-center rounded-md pt-[9px] ${t.name === "edge" ? "bg-[#f5eaec]" : ""}`}>
              {t.icon}
              {t.running && <div className="mt-[5px] h-1 w-2 shrink-0 rounded-full bg-[#8b8081]" />}
              {t.name === "edge" && <div className="mt-[5px] h-1 w-5 shrink-0 rounded-full bg-[#0a75d8]" />}
            </div>
          </div>
        ))}
      </div>
      <Slot className="ml-[77px]"><svg width="14" height="9" fill="none" stroke="#1c1c1c" strokeWidth="1.7"><path d="m1 7.500 6-6 6 6" /></svg></Slot>
      <Slot className="ml-3">
        <svg width="22" height="20" viewBox="0 0 22 20"><path d="M5 14Q1 14 1 10.500T5 7q1.500-5.500 6.500-5 4 0 5 4 4.500.5 4.500 4t-4 4z" fill="#a5a2a2" stroke="#2b2b2b" strokeWidth="1.6" /><circle cx="15.5" cy="13" r="6" fill="#fff" /><path d="M11.500 12.500q.8-3.500 4-3.500 2.300 0 3.500 1.500M19.500 13.500q-.8 3.500-4 3.500-2.300 0-3.500-1.500M19.500 8v3h-3M11.500 18v-3h3" fill="none" stroke="#1469c0" strokeWidth="1.4" /></svg>
      </Slot>
      <div className="ml-[17px] w-[34px] text-center text-[14.3px] leading-5">ENG<br />US</div>
      <Slot className="ml-4">
        <svg width="20" height="16" viewBox="0 0 20 16" fill="none" stroke="#1c1c1c" strokeWidth="1.5"><path d="M.7 5.500q9.300-8.500 18.600 0M3.500 8.800q6.500-6 13 0M6.300 11.800q3.700-3.500 7.400 0" /><circle cx="10" cy="14" r="1.5" fill="#1c1c1c" stroke="none" /></svg>
      </Slot>
      <Slot className="ml-0.5">
        <svg width="20" height="16" viewBox="0 0 20 16" fill="none" stroke="#1c1c1c" strokeWidth="1.4"><path d="M1 5.500h3L8 1.500v13l-4-4H1zM10.500 5.500q1.500 2.500 0 5M13 3.500q3 4.500 0 9" /><path d="M16 1.500q5 6.500 0 13" stroke="#b5acae" /></svg>
      </Slot>
      <Slot className="ml-[3px]">
        <svg width="21" height="14" viewBox="0 0 21 14"><rect x="1" y="1" width="16.5" height="12" rx="3" fill="none" stroke="#1c1c1c" strokeWidth="1.5" /><rect x="3.5" y="3.5" width="7" height="7" fill="#1c1c1c" /><path d="M18.500 4.500q2 0 2 2.500t-2 2.500z" fill="#1c1c1c" /></svg>
      </Slot>
      <div className="mr-[3px] mb-0.5 ml-[11px] w-[68px] text-right text-[14.5px] leading-5 whitespace-nowrap">04:35 PM<br /><span className="tracking-[0.45px]">14-04-24</span></div>
      <Slot className="ml-[2px]">
        <svg width="18" height="19" viewBox="0 0 18 19" fill="none" stroke="#1c1c1c" strokeWidth="1.4" strokeLinejoin="round"><path d="M9 1q6 .3 6 6.500v4l1.800 3.500H1.200L3 11.500v-4Q3 1.300 9 1zM6.500 15.500q.3 2.500 2.500 2.500t2.500-2.500" /></svg>
      </Slot>
      <svg className="ml-[16px] shrink-0" width="30" height="30" viewBox="0 0 30 30">
        <defs><linearGradient id="pc1" x2="0" y2="1"><stop stopColor="#2a8df0" /><stop offset=".5" stopColor="#3fb87c" /><stop offset="1" stopColor="#f2c61d" /></linearGradient><linearGradient id="pc2" x1="1" y1="0" x2="0" y2="1"><stop stopColor="#a45cf0" /><stop offset="1" stopColor="#f2647c" /></linearGradient></defs>
        <path d="M12 1h7q2 0 3 3l1 4-6 1z" fill="#1746c9" />
        <path d="M7 1h11q-2 1-3 4l-3 12q-1 2.500-3.500 2.500H4Q0 19.500 1 15L4 4q1-3 3-3z" fill="url(#pc1)" />
        <path d="M20 8h5q4.500 0 3.500 4L26 21H12l4-10q1-3 4-3z" fill="url(#pc2)" />
        <rect x="7" y="19.5" width="22" height="9.5" rx="2" fill="#fcc40c" />
        <text x="18" y="27.3" fontSize="8" fontWeight="800" textAnchor="middle" fill="#1c1c1c" fontFamily="Open Sans, sans-serif">PRE</text>
      </svg>
    </div>
  );
}

export default function App() {
  return (
    <div className="flex h-[1080px] w-[1920px] flex-col overflow-hidden bg-[#3b3b3b] font-['Open_Sans',sans-serif]">
      <TitleBar />
      <Toolbar />
      <FavoritesBar />
      <main className="mx-[5px] mb-[5px] flex h-[885px] shrink-0 items-start overflow-hidden rounded-[10px] bg-white font-['Liberation_Serif',serif]">
        <CheckoutSteps />
        <OrderPanel />
        <Scrollbar />
      </main>
      <Taskbar />
    </div>
  );
}
